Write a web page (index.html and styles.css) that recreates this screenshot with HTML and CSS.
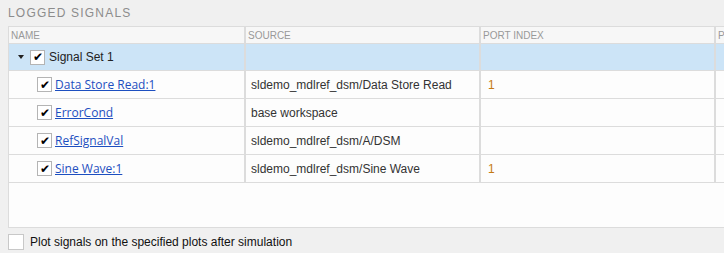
FILE: index.html
```html
<!DOCTYPE html>
<html>
<head>
  <title>Logged Signals</title>
  <link rel="stylesheet" href="styles.css">
</head>
<body>
  <div class="panel">
    <div class="panel-title">LOGGED SIGNALS</div>

    <div class="grid-wrap">
      <table class="signals">
        <colgroup>
          <col class="c-name">
          <col class="c-source">
          <col class="c-port">
          <col class="c-extra">
        </colgroup>
        <thead>
          <tr>
            <th>NAME</th>
            <th>SOURCE</th>
            <th>PORT INDEX</th>
            <th>PLOT</th>
          </tr>
        </thead>
        <tbody>
          <tr class="group selected">
            <td>
              <div class="name-cell">
                <span class="twisty"></span>
                <span class="check on">&#10004;</span>
                <span class="group-label">Signal Set 1</span>
              </div>
            </td>
            <td></td>
            <td></td>
            <td></td>
          </tr>
          <tr>
            <td><div class="name-cell child"><span class="check on">&#10004;</span><a href="#">Data Store Read:1</a></div></td>
            <td class="source">sldemo_mdlref_dsm/Data Store Read</td>
            <td class="port">1</td>
            <td></td>
          </tr>
          <tr>
            <td><div class="name-cell child"><span class="check on">&#10004;</span><a href="#">ErrorCond</a></div></td>
            <td class="source">base workspace</td>
            <td></td>
            <td></td>
          </tr>
          <tr>
            <td><div class="name-cell child"><span class="check on">&#10004;</span><a href="#">RefSignalVal</a></div></td>
            <td class="source">sldemo_mdlref_dsm/A/DSM</td>
            <td></td>
            <td></td>
          </tr>
          <tr>
            <td><div class="name-cell child"><span class="check on">&#10004;</span><a href="#">Sine Wave:1</a></div></td>
            <td class="source">sldemo_mdlref_dsm/Sine Wave</td>
            <td class="port">1</td>
            <td></td>
          </tr>
        </tbody>
      </table>
    </div>

    <label class="plot-option">
      <span class="check big"></span>
      <span>Plot signals on the specified plots after simulation</span>
    </label>
  </div>
</body>
</html>
```

FILE: styles.css
```css
  html, body {
    margin: 0;
    padding: 0;
    background-color: #f0f0f0;
    overflow: hidden;
  }

  /* Outer panel */
  .panel {
    padding: 7px 0 0 8px;
    font-family: "Liberation Sans", Arial, sans-serif;
  }

  .panel-title {
    font-size: 12px;
    line-height: 13px;
    letter-spacing: 1.2px;
    color: #8c8c8c;
    margin-bottom: 6px;
  }

  /* Grid area */
  .grid-wrap {
    width: 900px;
    height: 200px;
    background-color: #fdfdfd;
    border: 1px solid #dcdcdc;
    border-right: none;
  }

  .signals {
    border-collapse: collapse;
    table-layout: fixed;
    width: 900px;
  }

  .c-name { width: 236px; }
  .c-source { width: 235px; }
  .c-port { width: 235px; }

  .signals th {
    height: 16px;
    padding: 0 0 0 2px;
    text-align: left;
    font-weight: normal;
    font-size: 10px;
    color: #999;
    background-color: #f7f7f7;
    border-right: 2px solid #dcdcdc;
    border-bottom: 1px solid #dcdcdc;
    white-space: nowrap;
    overflow: hidden;
  }

  .signals td {
    height: 27px;
    padding: 0 0 0 7px;
    font-size: 12px;
    color: #333;
    border-right: 2px solid #dcdcdc;
    border-bottom: 1px solid #dcdcdc;
    white-space: nowrap;
    overflow: hidden;
  }

  .signals td.source {
    padding-left: 5px;
  }

  .signals tr.group td {
    height: 26px;
  }

  .signals tr.selected td {
    background-color: #cce4f7;
  }

  .signals td.port {
    color: #c47a12;
  }

  .name-cell {
    display: flex;
    align-items: center;
  }

  .name-cell.child {
    padding-left: 21px;
  }

  .twisty {
    width: 0;
    height: 0;
    margin: 0 6px 0 2px;
    border-left: 3.5px solid transparent;
    border-right: 3.5px solid transparent;
    border-top: 4px solid #222;
  }

  .check {
    box-sizing: border-box;
    display: inline-flex;
    align-items: center;
    justify-content: center;
    width: 15px;
    height: 15px;
    border: 1px solid #b4b4b4;
    background-color: #fff;
    color: #000;
    font-size: 12px;
    line-height: 1;
    margin-right: 3px;
  }

  .group-label {
    font-size: 12px;
    color: #222;
    margin-left: 1px;
  }

  .name-cell a {
    font-family: "Open Sans", "Noto Sans", sans-serif;
    font-size: 12px;
    color: #1d4fc0;
    text-decoration: underline;
  }

  /* Bottom option */
  .plot-option {
    display: flex;
    align-items: center;
    margin-top: 6px;
    font-size: 12px;
    color: #111;
  }

  .check.big {
    width: 16px;
    height: 16px;
    border-color: #c8c8c8;
    margin-right: 6px;
  }
```
